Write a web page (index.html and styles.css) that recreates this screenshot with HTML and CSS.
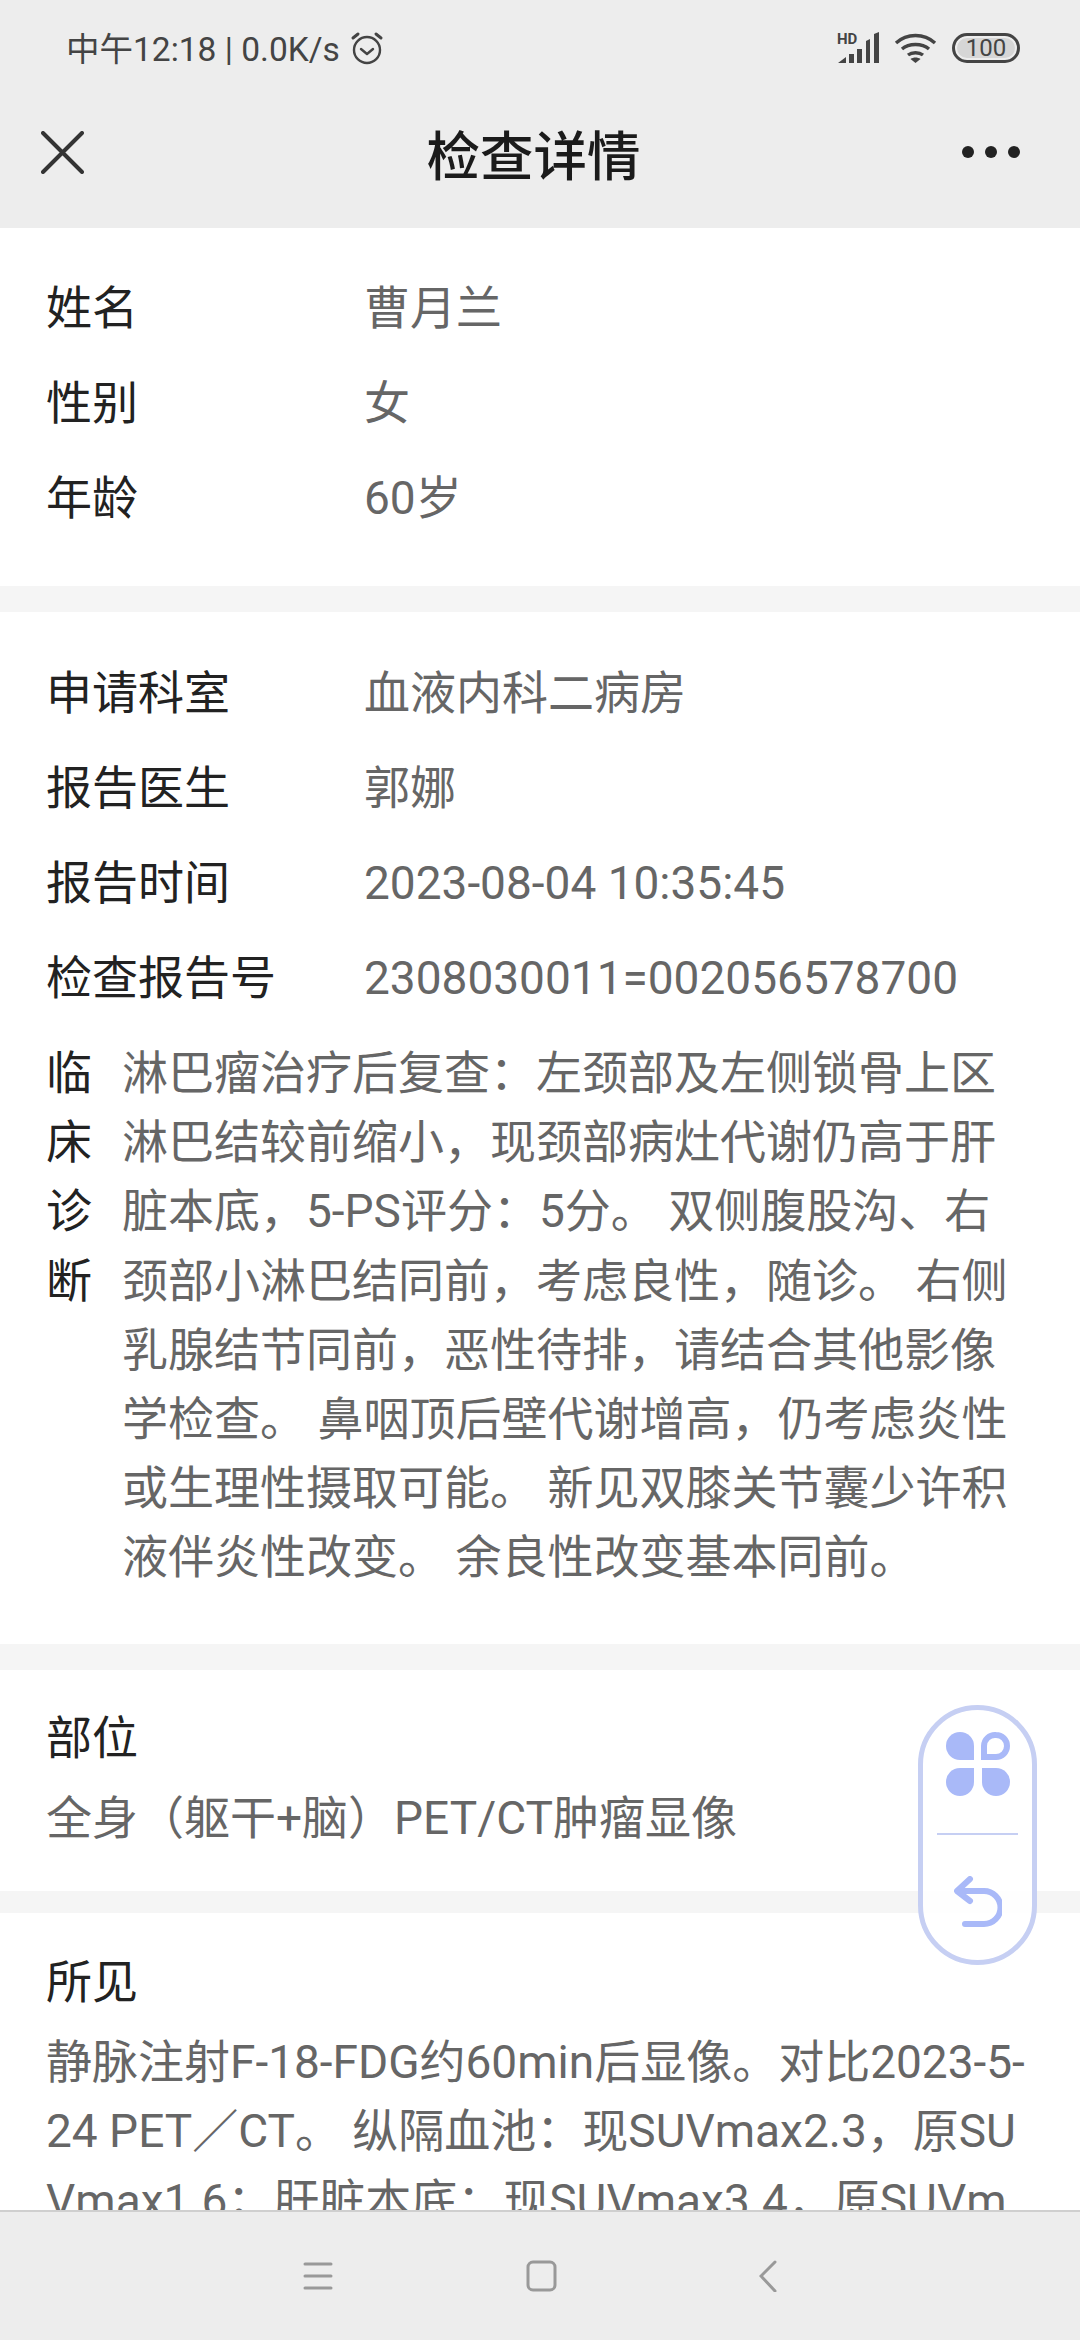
FILE: index.html
```html
<!DOCTYPE html>
<html lang="zh-CN">
<head>
  <meta charset="UTF-8">
  <title>检查详情</title>
  <link rel="stylesheet" href="styles.css">
</head>
<body>

<div id="phone">
  <div id="statusBar">
    <div class="status-left">
      <span>中午12:18 | 0.0K/s</span>
      <svg width="34" height="34" viewBox="0 0 34 34" fill="none" stroke="#444" stroke-width="2.4">
        <circle cx="17" cy="19" r="13"/>
        <path d="M11 18l6 5 6-5" stroke-linecap="round" stroke-linejoin="round"/>
        <path d="M3 7l5-4M31 7l-5-4" stroke-linecap="round" stroke-width="3"/>
      </svg>
    </div>
    <div class="status-right">
      <svg class="signal" width="42" height="32" viewBox="0 0 42 32">
        <text x="0" y="12" class="hd-text">HD</text>
        <path d="M1 31l8-6v6zM12 22h5v9h-5zM20 17h5v14h-5zM29 9l4-2v24h-4zM37 2l5-2v31h-5z" fill="#444"/>
      </svg>
      <svg width="43" height="32" viewBox="0 0 43 32" fill="none" stroke="#444" stroke-width="3.4">
        <path d="M2 11c11-10 28-10 39 0M8 17c7-6 20-6 27 0M14 23c4-3 11-3 15 0"/>
        <path d="M21.500 31l-5-4c3-2 7-2 10 0z" fill="#444" stroke="none"/>
      </svg>
      <div class="battery"><span>100</span></div>
    </div>
  </div>

  <header id="navBar">
    <svg class="nav-close" width="43" height="43" viewBox="0 0 43 43" fill="none" stroke="#333" stroke-width="4" stroke-linecap="round">
      <path d="M2 2l39 39M41 2L2 41"/>
    </svg>
    <h1>检查详情</h1>
    <div class="nav-more"><i></i><i></i><i></i></div>
  </header>

  <main id="content">
    <section class="block block-person">
      <div class="row"><span class="label">姓名</span><span class="value">曹月兰</span></div>
      <div class="row"><span class="label">性别</span><span class="value">女</span></div>
      <div class="row"><span class="label">年龄</span><span class="value">60岁</span></div>
    </section>

    <section class="block block-report">
      <div class="row"><span class="label">申请科室</span><span class="value">血液内科二病房</span></div>
      <div class="row"><span class="label">报告医生</span><span class="value">郭娜</span></div>
      <div class="row"><span class="label">报告时间</span><span class="value">2023-08-04 10:35:45</span></div>
      <div class="row"><span class="label">检查报告号</span><span class="value">2308030011=002056578700</span></div>
      <div class="diagnosis">
        <div class="diagnosis-label">临床诊断</div>
        <div class="diagnosis-text">淋巴瘤治疗后复查：左颈部及左侧锁骨上区淋巴结较前缩小，现颈部病灶代谢仍高于肝脏本底，5-PS评分：5分。 双侧腹股沟、右颈部小淋巴结同前，考虑良性，随诊。 右侧乳腺结节同前，恶性待排，请结合其他影像学检查。 鼻咽顶后壁代谢增高，仍考虑炎性或生理性摄取可能。 新见双膝关节囊少许积液伴炎性改变。 余良性改变基本同前。</div>
      </div>
    </section>

    <section class="block block-part">
      <div class="title">部位</div>
      <div class="text">全身（躯干+脑）PET/CT肿瘤显像</div>
    </section>

    <section class="block block-findings">
      <div class="title">所见</div>
      <div class="text findings-text">静脉注射F-18-FDG约60min后显像。对比2023-5-24 PET／CT。 纵隔血池：现SUVmax2.3，原SUVmax1.6；肝脏本底：现SUVmax3.4，原SUVmax</div>
    </section>
  </main>

  <div id="floatBall">
    <svg class="ball-apps" width="66" height="66" viewBox="0 0 66 66" fill="#a9b9f8">
      <path d="M15 1a14 14 0 0 1 14 14v14H15a14 14 0 0 1 0-28z"/>
      <path d="M51 4a11 11 0 0 1 0 22H39V15A11 11 0 0 1 51 4z" fill="none" stroke="#a9b9f8" stroke-width="6"/>
      <path d="M1 51a14 14 0 0 1 14-14h14v14a14 14 0 0 1-28 0z"/>
      <path d="M37 37h14a14 14 0 1 1-14 14z"/>
    </svg>
    <div class="ball-line"></div>
    <svg class="ball-back" width="48" height="52" viewBox="0 0 48 52" fill="none" stroke="#a9b9f8" stroke-width="6" stroke-linecap="round" stroke-linejoin="round">
      <path d="M16 3L3 15l13 10"/>
      <path d="M4 15h26a15 15 0 0 1 0 33H11"/>
    </svg>
  </div>

  <nav id="bottomBar">
    <svg width="30" height="28" viewBox="0 0 30 28" stroke="#999" stroke-width="3" stroke-linecap="round">
      <path d="M2 2h26M2 14h26M2 26h26"/>
    </svg>
    <svg width="31" height="32" viewBox="0 0 31 32" fill="none" stroke="#999" stroke-width="3">
      <rect x="2" y="2" width="27" height="28" rx="5"/>
    </svg>
    <svg class="nav-back" width="18" height="32" viewBox="0 0 18 32" fill="none" stroke="#999" stroke-width="3" stroke-linecap="round">
      <path d="M16 2L2 16l14 15"/>
    </svg>
  </nav>
</div>

</body>
</html>
```

FILE: styles.css
```css
* {
  box-sizing: border-box;
}
html, body {
  margin: 0;
  padding: 0;
}
body {
  font-family: "Roboto", "Noto Sans CJK SC", sans-serif;
  background: #f5f5f5;
}
#phone {
  position: relative;
  width: 1080px;
  height: 2340px;
  overflow: hidden;
  display: flex;
  flex-direction: column;
}
#statusBar {
  height: 80px;
  flex: none;
  background: #ededed;
  display: flex;
  justify-content: space-between;
  align-items: center;
  padding: 16px 60px 0 66px;
  color: #444;
  font-size: 33.5px;
}
.status-left, .status-right {
  display: flex;
  align-items: center;
  gap: 10px;
}
.status-left span {
  margin-bottom: 4px;
}
.status-right {
  gap: 15px;
}
.signal {
  overflow: visible;
}
.hd-text {
  font-size: 15px;
  font-weight: 700;
  fill: #444;
}
.battery {
  width: 68px;
  height: 30px;
  border: 3px solid #444;
  border-radius: 15px;
  background: #d6d6d6;
  box-shadow: inset 0 0 0 2px #ededed;
  font-size: 24px;
  line-height: 24px;
  text-align: center;
}
#navBar {
  height: 148px;
  flex: none;
  background: #ededed;
  display: flex;
  align-items: center;
  justify-content: space-between;
  padding: 0 60px 4px 41px;
}
#navBar h1 {
  margin: 0 0 0 21px;
  font-size: 53.5px;
  font-weight: 500;
  color: #1b1b1b;
}
.nav-more {
  display: flex;
  gap: 11px;
}
.nav-more i {
  width: 12px;
  height: 12px;
  border-radius: 50%;
  background: #222;
}
#content {
  flex: 1;
  min-height: 0;
  overflow: hidden;
  display: flex;
  flex-direction: column;
}
.block {
  background: #fff;
  padding: 0 46px;
}
.block-person {
  padding-top: 32px;
  padding-bottom: 41px;
}
.block-report {
  margin-top: 26px;
  padding-top: 33px;
  padding-bottom: 51.800px;
}
.block-part {
  margin-top: 26px;
  padding-top: 38px;
  padding-bottom: 37px;
}
.block-findings {
  margin-top: 22px;
  flex: 1;
  padding-top: 39px;
}
.row {
  display: flex;
  height: 95px;
  padding-top: 11px;
  align-items: baseline;
  font-size: 46px;
}
.label {
  width: 318px;
  flex: none;
  color: #222;
}
.value {
  color: #666;
}
.diagnosis {
  display: flex;
  margin-top: 14px;
  font-size: 46px;
  line-height: 69.2px;
}
.diagnosis-label {
  width: 76px;
  flex: none;
  padding-right: 30px;
  color: #222;
}
.diagnosis-text {
  color: #666;
}
.title {
  font-size: 46px;
  line-height: 60px;
  color: #222;
}
.text {
  font-size: 46px;
  line-height: 69.5px;
  color: #666;
  margin-top: 16px;
  word-break: break-all;
}
.findings-text {
  margin-right: 6px;
}
#floatBall {
  position: absolute;
  left: 918px;
  top: 1705px;
  width: 119px;
  height: 260px;
  border: 5px solid #c6cff3;
  border-radius: 60px;
  background: rgba(255, 255, 255, 0.85);
  display: flex;
  flex-direction: column;
  align-items: center;
}
.ball-apps {
  margin-top: 21px;
}
.ball-line {
  width: 81px;
  height: 2px;
  background: #c6cff3;
  margin-top: 36px;
}
.ball-back {
  margin-top: 41px;
}
#bottomBar {
  height: 130px;
  flex: none;
  background: #ededed;
  border-top: 2px solid #cfcfcf;
  display: flex;
  align-items: center;
  justify-content: center;
  gap: 193px;
}
.nav-back {
  margin-left: 9px;
}
```
